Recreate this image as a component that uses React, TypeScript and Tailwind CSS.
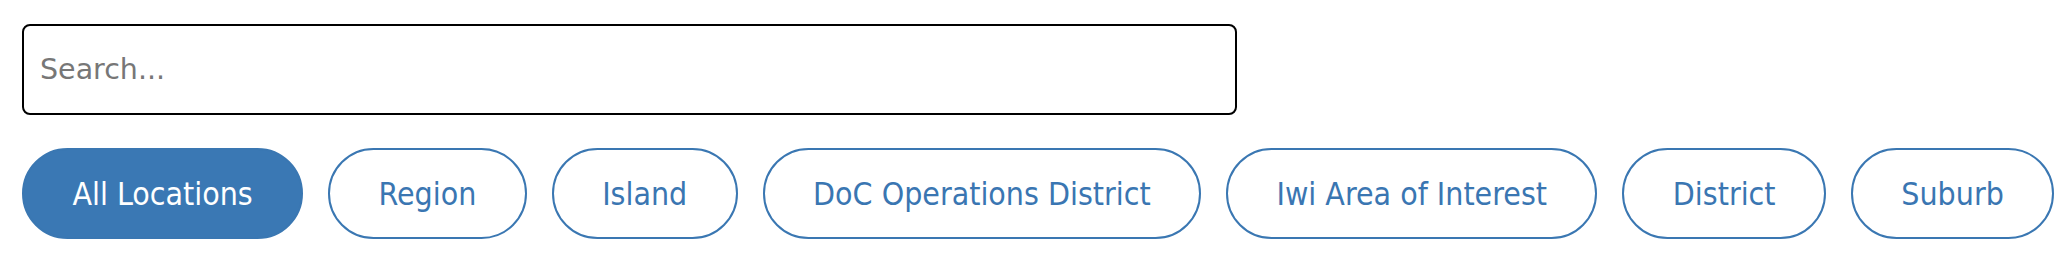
import { useState } from "react";

const filters = [
  "All Locations",
  "Region",
  "Island",
  "DoC Operations District",
  "Iwi Area of Interest",
  "District",
  "Suburb",
];

export default function App() {
  const [active, setActive] = useState("All Locations");
  const [query, setQuery] = useState("");

  return (
    <div className="min-h-[262px] bg-white pl-[22px] pt-[24px]">
      {/* Search box */}
      <input
        type="text"
        value={query}
        onChange={(e) => setQuery(e.target.value)}
        placeholder="Search..."
        className="block h-[91px] w-[1215px] rounded-[8px] border-[2.5px] border-black bg-white px-[16px] font-['DejaVu_Sans',sans-serif] text-[28.5px] text-[#222] outline-none placeholder:text-[#777]"
      />

      {/* Location type pills */}
      <div className="mt-[33px] flex gap-[25px]">
        {filters.map((f) => {
          const on = f === active;
          return (
            <button
              key={f}
              onClick={() => setActive(f)}
              className={`flex h-[91px] items-center whitespace-nowrap rounded-[46px] border-2 border-[#3a77b2] px-[48.4px] font-['DejaVu_Sans_Condensed','DejaVu_Sans',sans-serif] text-[31.8px] font-stretch-condensed leading-none ${
                on ? "bg-[#3a78b4] text-white" : "bg-white text-[#3a76b2]"
              }`}
            >
              {f}
            </button>
          );
        })}
      </div>
    </div>
  );
}
